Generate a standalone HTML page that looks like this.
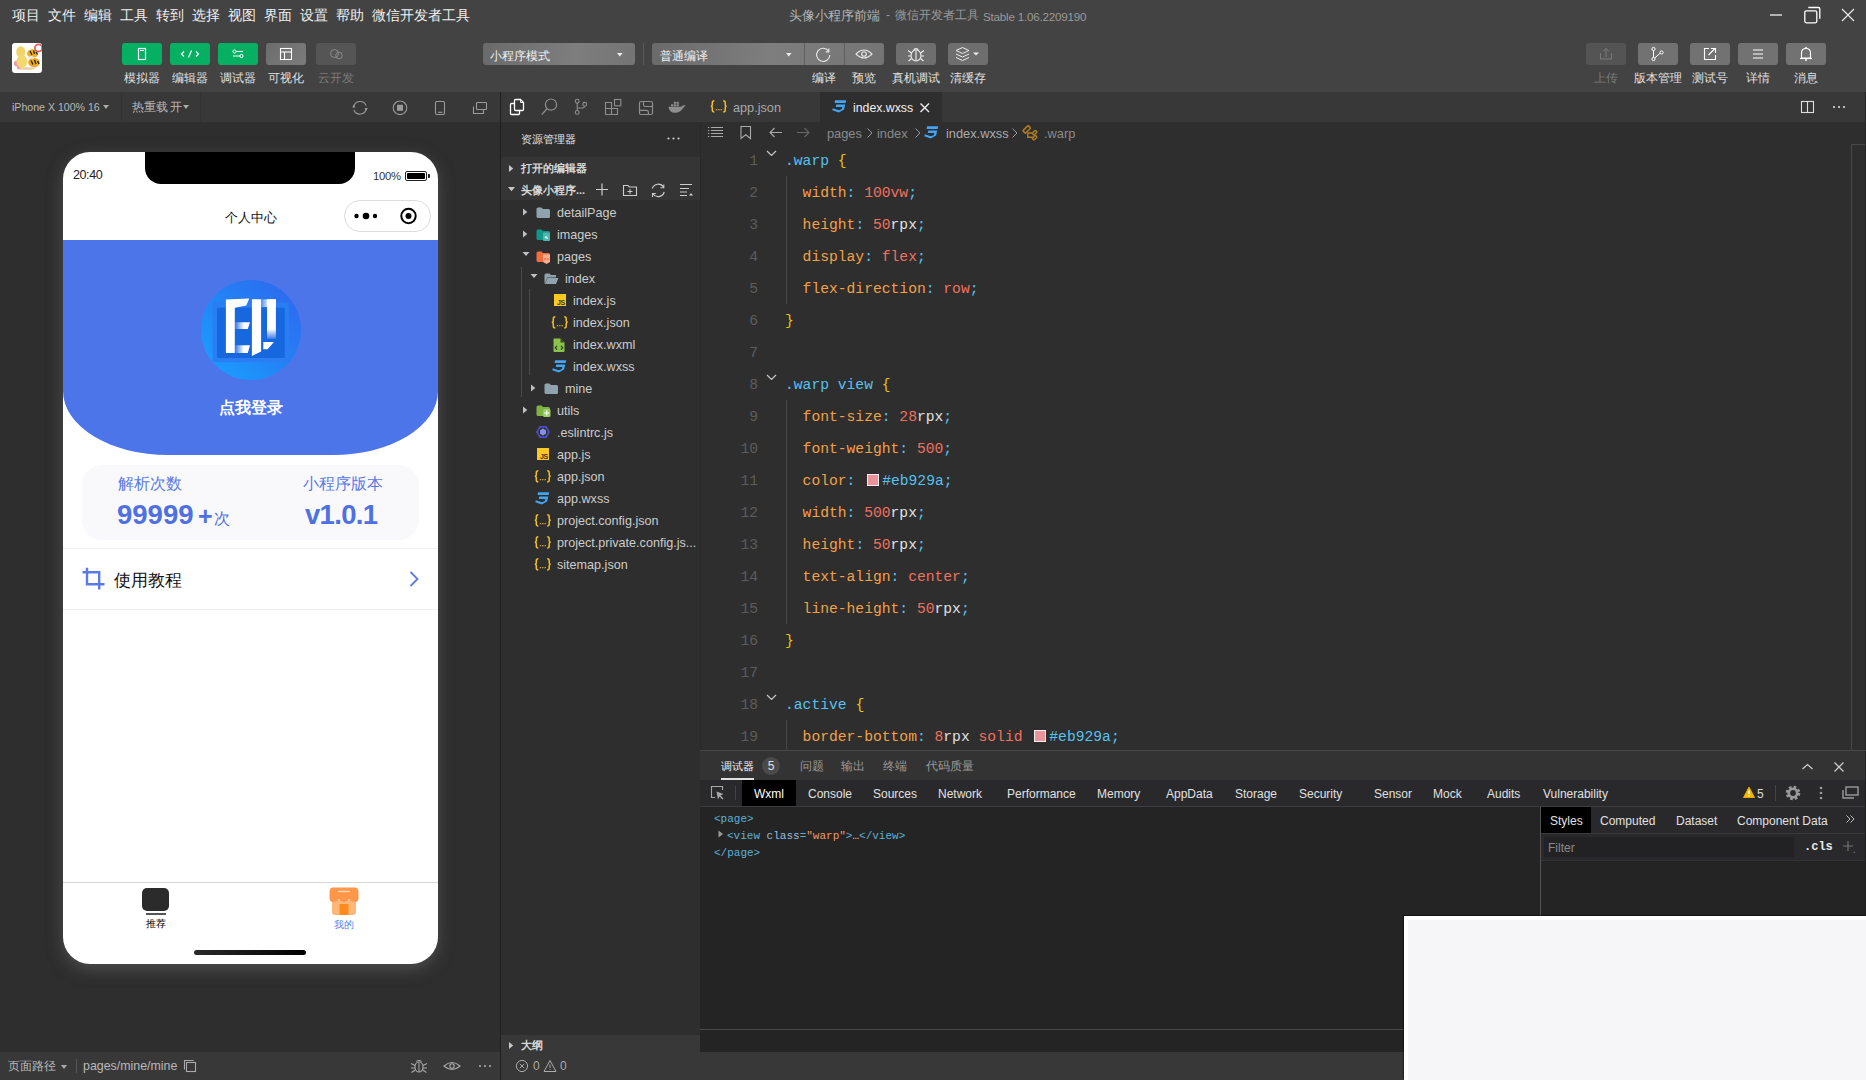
<!DOCTYPE html>
<html><head><meta charset="utf-8">
<style>
*{box-sizing:border-box;margin:0;padding:0}
html,body{width:1866px;height:1080px;overflow:hidden}
body{position:relative;background:#2e2e2e;font-family:"Liberation Sans",sans-serif;color:#ddd}
.a{position:absolute}
.t{position:absolute;white-space:nowrap}
.mono{font-family:"Liberation Mono",monospace}
svg{position:absolute;overflow:visible}
</style></head><body>

<!-- ============ TOP BAR ============ -->
<div class="a" style="left:0;top:0;width:1866px;height:92px;background:#434343"></div>
<div class="t" id="menu" style="left:12px;top:6px;height:18px;font-size:14px;line-height:18px;color:#f0f0f0;display:flex;gap:8px">
<span>项目</span><span>文件</span><span>编辑</span><span>工具</span><span>转到</span><span>选择</span><span>视图</span><span>界面</span><span>设置</span><span>帮助</span><span>微信开发者工具</span>
</div>
<div class="t" style="left:789px;top:7px;font-size:13px;line-height:17px;color:#b4b4b4">头像小程序前端</div><div class="t" style="left:886px;top:7px;font-size:12px;line-height:17px;color:#9a9a9a">-</div><div class="t" style="left:895px;top:7px;font-size:12.1px;line-height:17px;color:#9a9a9a">微信开发者工具</div><div class="t" style="left:983px;top:8px;font-size:11.6px;line-height:17px;color:#9a9a9a;letter-spacing:-0.2px">Stable 1.06.2209190</div>

<div class="a" style="left:12px;top:43px;width:30px;height:30px;border-radius:3px;background:#fff;overflow:hidden"><svg width="30" height="30" style="left:0;top:0"><circle cx="5" cy="20.5" r="3" fill="#ec8a98" opacity="0.85"/><circle cx="7.5" cy="24" r="2.6" fill="#ec8a98" opacity="0.85"/><circle cx="23" cy="23" r="1.8" fill="#ec8a98" opacity="0.7"/><ellipse cx="15" cy="25.5" rx="8" ry="1.3" fill="#e6cfa0"/><ellipse cx="8.8" cy="9" rx="4.6" ry="5.8" fill="#f1d468"/><ellipse cx="10" cy="18.5" rx="5.5" ry="6.5" fill="#f3d870"/><ellipse cx="20.5" cy="10.5" rx="5.6" ry="4.3" fill="#f2b020"/><ellipse cx="22" cy="19.5" rx="5.8" ry="4.5" fill="#eea51f"/><path d="M18 8 L20 12 M21.5 7.5 L22.5 11 M24 9 L25.5 11.5 M19 17.5 L21 21.5 M22.5 17 L24 21 M25.5 18 L27 21" stroke="#222" stroke-width="1.3"/><ellipse cx="19" cy="14.5" rx="3" ry="1.5" fill="#e8e8e8"/><circle cx="26.5" cy="5" r="3.6" fill="none" stroke="#dd5555" stroke-width="1.8" opacity="0.9"/></svg></div>
<div class="a" style="left:122px;top:43px;width:40px;height:22px;border-radius:3px;background:#06b063"><svg width="40" height="22" style="left:0;top:0"><rect x="16.5" y="5.5" width="7" height="11" fill="none" stroke="#fff" stroke-width="1.2"/><line x1="18" y1="7.5" x2="22" y2="7.5" stroke="#fff" stroke-width="1"/></svg></div>
<div class="a" style="left:170px;top:43px;width:40px;height:22px;border-radius:3px;background:#06b063"><svg width="40" height="22" style="left:0;top:0"><path d="M14 8.5 L11.5 11 L14 13.5 M26 8.5 L28.5 11 L26 13.5 M21.5 7.5 L18.5 14.5" fill="none" stroke="#fff" stroke-width="1.2"/></svg></div>
<div class="a" style="left:218px;top:43px;width:40px;height:22px;border-radius:3px;background:#06b063"><svg width="40" height="22" style="left:0;top:0"><line x1="15" y1="8.5" x2="25" y2="8.5" stroke="#fff" stroke-width="1"/><line x1="15" y1="13" x2="25" y2="13" stroke="#fff" stroke-width="1"/><circle cx="16.5" cy="8.5" r="1.6" fill="#06b063" stroke="#fff" stroke-width="1"/><circle cx="23.5" cy="13" r="1.6" fill="#06b063" stroke="#fff" stroke-width="1"/></svg></div>
<div class="a" style="left:266px;top:43px;width:40px;height:22px;border-radius:3px;background:linear-gradient(135deg,#6c6c6c,#7c7c7c)"><svg width="40" height="22" style="left:0;top:0"><rect x="14.5" y="5.5" width="11" height="11" fill="none" stroke="#fff" stroke-width="1.1"/><line x1="14.5" y1="9" x2="25.5" y2="9" stroke="#fff" stroke-width="1.1"/><line x1="18.5" y1="9" x2="18.5" y2="16.5" stroke="#fff" stroke-width="1.1"/></svg></div>
<div class="a" style="left:316px;top:43px;width:40px;height:22px;border-radius:3px;background:#555555"><svg width="40" height="22" style="left:0;top:0"><circle cx="18.5" cy="10.5" r="4" fill="none" stroke="#8a8a8a" stroke-width="1"/><circle cx="23" cy="12.5" r="3.3" fill="none" stroke="#8a8a8a" stroke-width="1"/></svg></div>
<div class="t" style="left:102px;top:70px;width:80px;text-align:center;font-size:12px;line-height:16px;color:#e0e0e0">模拟器</div>
<div class="t" style="left:150px;top:70px;width:80px;text-align:center;font-size:12px;line-height:16px;color:#e0e0e0">编辑器</div>
<div class="t" style="left:198px;top:70px;width:80px;text-align:center;font-size:12px;line-height:16px;color:#e0e0e0">调试器</div>
<div class="t" style="left:246px;top:70px;width:80px;text-align:center;font-size:12px;line-height:16px;color:#e0e0e0">可视化</div>
<div class="t" style="left:296px;top:70px;width:80px;text-align:center;font-size:12px;line-height:16px;color:#7a7a7a">云开发</div>
<div class="a" style="left:483px;top:43px;width:152px;height:22px;border-radius:3px;background:linear-gradient(100deg,#6a6a6a,#7e7e7e 60%,#747474)"></div>
<div class="t" style="left:490px;top:48px;font-size:12.3px;line-height:16px;color:#f0f0f0">小程序模式</div>
<svg width="8" height="5" style="left:617px;top:53px"><path d="M0 0H5.6L2.8 3.4Z" fill="#eee"/></svg>
<div class="a" style="left:643px;top:43px;width:1px;height:22px;background:#5a5a5a"></div>
<div class="a" style="left:652px;top:43px;width:232px;height:22px;border-radius:3px;background:linear-gradient(100deg,#6a6a6a,#7e7e7e 50%,#747474)"></div>
<div class="a" style="left:804px;top:43px;width:1px;height:22px;background:#5f5f5f"></div>
<div class="a" style="left:844px;top:43px;width:1px;height:22px;background:#5f5f5f"></div>
<div class="t" style="left:660px;top:48px;font-size:12.2px;line-height:16px;color:#f0f0f0">普通编译</div>
<svg width="8" height="5" style="left:786px;top:53px"><path d="M0 0H5.6L2.8 3.4Z" fill="#eee"/></svg>
<svg width="18" height="18" style="left:815px;top:45px"><path d="M13.6 6 A6.6 6.6 0 1 0 14.8 10" fill="none" stroke="#e8e8e8" stroke-width="1.1"/><path d="M13.8 3.5 V6.8 H10.8" fill="none" stroke="#e8e8e8" stroke-width="1.2"/></svg>
<svg width="18" height="12" style="left:855px;top:48px"><path d="M1 6 Q9 -2 17 6 Q9 14 1 6Z" fill="none" stroke="#e8e8e8" stroke-width="1.1"/><circle cx="9" cy="6" r="2.3" fill="none" stroke="#e8e8e8" stroke-width="1.1"/></svg>
<div class="a" style="left:896px;top:43px;width:40px;height:22px;border-radius:3px;background:#6e6e6e"></div>
<svg width="18" height="18" style="left:907px;top:46px"><ellipse cx="9" cy="9.5" rx="5" ry="5.5" fill="none" stroke="#eee" stroke-width="1.1"/><line x1="9" y1="5" x2="9" y2="14.5" stroke="#eee" stroke-width="1.1"/><path d="M6.3 4.5 Q9 0.8 11.7 4.5" fill="none" stroke="#eee" stroke-width="1.1"/><path d="M1 4.5 L4.5 7 M17 4.5 L13.5 7 M1 10 H4 M17 10 H14 M1.5 15 L4.5 12.5 M16.5 15 L13.5 12.5" stroke="#eee" stroke-width="1.1"/></svg>
<div class="a" style="left:948px;top:43px;width:40px;height:22px;border-radius:3px;background:#6e6e6e"></div>
<svg width="26" height="16" style="left:955px;top:46px"><path d="M1 4.5 L7.5 1.5 L14 4.5 L7.5 7.5Z" fill="none" stroke="#eee" stroke-width="1"/><path d="M1 8 L7.5 11 L14 8 M1 11.5 L7.5 14.5 L14 11.5" fill="none" stroke="#eee" stroke-width="1"/><path d="M18 6.5 H24 L21 9.5Z" fill="#eee"/></svg>
<div class="t" style="left:784px;top:70px;width:80px;text-align:center;font-size:12px;line-height:16px;color:#e0e0e0">编译</div>
<div class="t" style="left:824px;top:70px;width:80px;text-align:center;font-size:12px;line-height:16px;color:#e0e0e0">预览</div>
<div class="t" style="left:876px;top:70px;width:80px;text-align:center;font-size:12px;line-height:16px;color:#e0e0e0">真机调试</div>
<div class="t" style="left:928px;top:70px;width:80px;text-align:center;font-size:12px;line-height:16px;color:#e0e0e0">清缓存</div>
<div class="a" style="left:1586px;top:43px;width:40px;height:22px;border-radius:3px;background:#545454"><svg width="40" height="22" style="left:0;top:0"><path d="M14.5 10 V16 H25.5 V10" fill="none" stroke="#7a7a7a" stroke-width="1"/><path d="M20 14 V5.5 M17 8.5 L20 5.5 L23 8.5" fill="none" stroke="#7a7a7a" stroke-width="1"/></svg></div>
<div class="a" style="left:1638px;top:43px;width:40px;height:22px;border-radius:3px;background:#727272"><svg width="40" height="22" style="left:0;top:0"><circle cx="15.5" cy="6" r="1.6" fill="none" stroke="#fff" stroke-width="1"/><circle cx="15.5" cy="16" r="1.6" fill="none" stroke="#fff" stroke-width="1"/><circle cx="23.5" cy="9.5" r="1.6" fill="none" stroke="#fff" stroke-width="1"/><path d="M15.5 7.6 V14.4 M22 10.3 L17 14.8" stroke="#fff" stroke-width="1"/></svg></div>
<div class="a" style="left:1690px;top:43px;width:40px;height:22px;border-radius:3px;background:#727272"><svg width="40" height="22" style="left:0;top:0"><path d="M19 5.5 H14.5 V16.5 H25.5 V12" fill="none" stroke="#fff" stroke-width="1.1"/><path d="M18.5 12 L25 5.5 M21 5.5 H25.5 V10" fill="none" stroke="#fff" stroke-width="1.1"/></svg></div>
<div class="a" style="left:1738px;top:43px;width:40px;height:22px;border-radius:3px;background:#727272"><svg width="40" height="22" style="left:0;top:0"><path d="M15 7 H25 M15 11 H25 M15 15 H25" stroke="#fff" stroke-width="1.1"/></svg></div>
<div class="a" style="left:1786px;top:43px;width:40px;height:22px;border-radius:3px;background:#727272"><svg width="40" height="22" style="left:0;top:0"><path d="M15.5 15 V10 Q15.5 5.5 20 5.5 Q24.5 5.5 24.5 10 V15Z" fill="none" stroke="#fff" stroke-width="1.1"/><path d="M14 15.5 H26" stroke="#fff" stroke-width="1.2"/><path d="M19 17 H21" stroke="#fff" stroke-width="1.5"/><circle cx="20" cy="4.5" r="0.8" fill="#fff"/></svg></div>
<div class="t" style="left:1566px;top:70px;width:80px;text-align:center;font-size:12px;line-height:16px;color:#7a7a7a">上传</div>
<div class="t" style="left:1618px;top:70px;width:80px;text-align:center;font-size:12px;line-height:16px;color:#e0e0e0">版本管理</div>
<div class="t" style="left:1670px;top:70px;width:80px;text-align:center;font-size:12px;line-height:16px;color:#e0e0e0">测试号</div>
<div class="t" style="left:1718px;top:70px;width:80px;text-align:center;font-size:12px;line-height:16px;color:#e0e0e0">详情</div>
<div class="t" style="left:1766px;top:70px;width:80px;text-align:center;font-size:12px;line-height:16px;color:#e0e0e0">消息</div>
<svg width="100" height="22" style="left:1766px;top:5px"><path d="M4 10 H16" stroke="#b4b4b4" stroke-width="2"/><rect x="38.8" y="5.8" width="12" height="12" rx="1.5" fill="none" stroke="#fff" stroke-width="1.3"/><path d="M42.3 2.5 H52.5 Q53.8 2.5 53.8 3.8 V13.8" fill="none" stroke="#fff" stroke-width="1.3"/><path d="M76 4 L88 16 M88 4 L76 16" stroke="#eee" stroke-width="1.1"/></svg>
<div class="a" style="left:0;top:92px;width:500px;height:30px;background:#383838"></div>
<div class="a" style="left:121px;top:92px;width:1px;height:30px;background:#333"></div>
<div class="a" style="left:200px;top:92px;width:1px;height:30px;background:#333"></div>
<div class="t" style="left:12px;top:99px;font-size:10.6px;line-height:16px;color:#b8b8b8">iPhone X 100% 16</div>
<svg width="7" height="4" style="left:103px;top:105px"><path d="M0 0H6L3 4Z" fill="#aaa"/></svg>
<div class="t" style="left:132px;top:99px;font-size:12px;line-height:16px;color:#b8b8b8;word-spacing:-1px">热重载 开</div>
<svg width="7" height="4" style="left:183px;top:105px"><path d="M0 0H6L3 4Z" fill="#aaa"/></svg>
<svg width="140" height="22" style="left:350px;top:97px"><path d="M3.8 10 A6.4 6.4 0 0 1 16.1 8.6" fill="none" stroke="#9a9a9a" stroke-width="1.1"/><path d="M16.2 11.6 A6.4 6.4 0 0 1 3.9 13" fill="none" stroke="#9a9a9a" stroke-width="1.1"/><path d="M2.2 10.6 L3.8 7.6 L5.4 10.6Z" fill="#9a9a9a"/><path d="M14.6 11 L16.2 14 L17.8 11Z" fill="#9a9a9a"/><circle cx="50" cy="10.8" r="6.8" fill="none" stroke="#9a9a9a" stroke-width="1.1"/><rect x="47" y="7.8" width="6" height="6" fill="#9a9a9a"/><rect x="85.5" y="4.5" width="9" height="13" rx="1.2" fill="none" stroke="#9a9a9a" stroke-width="1.1"/><path d="M88 15.3 H92.5" stroke="#9a9a9a" stroke-width="1.1"/><rect x="126.5" y="5.5" width="10" height="7" rx="0.8" fill="none" stroke="#9a9a9a" stroke-width="1.1"/><path d="M123.5 9.5 V16.5 H133.5 V13" fill="none" stroke="#9a9a9a" stroke-width="1.1"/></svg>
<div class="a" style="left:0;top:1052px;width:500px;height:28px;background:#383838"></div>
<div class="t" style="left:8px;top:1058px;font-size:12px;line-height:16px;color:#b8b8b8">页面路径</div>
<svg width="7" height="4" style="left:61px;top:1065px"><path d="M0 0H6L3 4Z" fill="#aaa"/></svg>
<div class="a" style="left:76px;top:1059px;width:1px;height:14px;background:#555"></div>
<div class="t" style="left:83px;top:1058px;font-size:12.4px;line-height:16px;color:#b8b8b8">pages/mine/mine</div>
<svg width="14" height="14" style="left:183px;top:1059px"><rect x="3.5" y="3.5" width="9" height="9" fill="none" stroke="#aaa" stroke-width="1.1"/><path d="M1.5 10.5 V1.5 H10.5" fill="none" stroke="#aaa" stroke-width="1.1"/></svg>
<svg width="90" height="16" style="left:409px;top:1058px"><ellipse cx="10" cy="9" rx="4" ry="5" fill="none" stroke="#aaa" stroke-width="1.1"/><line x1="10" y1="5" x2="10" y2="14" stroke="#aaa" stroke-width="1"/><path d="M7.5 3.5 Q10 1.5 12.5 3.5" fill="none" stroke="#aaa" stroke-width="1.1"/><path d="M2 5.5 L6 7.5 M18 5.5 L14 7.5 M2 10 H6 M18 10 H14 M2.5 14.5 L6.3 12 M17.5 14.5 L13.7 12" stroke="#aaa" stroke-width="1.1"/><path d="M35 8 Q43 1 51 8 Q43 15 35 8Z" fill="none" stroke="#aaa" stroke-width="1.1"/><circle cx="43" cy="8" r="2.2" fill="none" stroke="#aaa" stroke-width="1.1"/><circle cx="71" cy="8" r="1.1" fill="#aaa"/><circle cx="76" cy="8" r="1.1" fill="#aaa"/><circle cx="81" cy="8" r="1.1" fill="#aaa"/></svg>
<div class="a" style="left:63px;top:152px;width:375px;height:812px;border-radius:27px;background:#fff;box-shadow:0 5px 16px rgba(110,110,110,0.5);overflow:hidden" id="phone"><div class="a" style="left:82px;top:0;width:210px;height:32px;background:#000;border-radius:0 0 16px 16px"></div><div class="t" style="left:10px;top:16px;font-size:12.5px;line-height:14px;color:#222;letter-spacing:-0.4px">20:40</div><div class="t" style="left:310px;top:18px;font-size:11.3px;line-height:13px;color:#333;letter-spacing:-0.3px">100%</div><div class="a" style="left:342px;top:19px;width:22px;height:10px;border:1.3px solid #222;border-radius:2px;padding:1px"><div style="width:100%;height:100%;background:#000;border-radius:1px"></div></div><div class="a" style="left:364.5px;top:22px;width:2px;height:4px;background:#222;border-radius:0 1px 1px 0"></div><div class="t" style="left:0;top:57px;width:375px;text-align:center;font-size:13.2px;line-height:18px;color:#111">个人中心</div><div class="a" style="left:281px;top:48px;width:87px;height:32px;border:1px solid #dcdcdc;border-radius:16px;background:#fff"></div><svg width="87" height="32" style="left:281px;top:48px"><circle cx="12.5" cy="16" r="2.2" fill="#000"/><circle cx="22" cy="16" r="3.3" fill="#000"/><circle cx="31" cy="16" r="2.2" fill="#000"/><circle cx="64.5" cy="16" r="7.2" fill="none" stroke="#000" stroke-width="2"/><circle cx="64.5" cy="16" r="3" fill="#000"/></svg><div class="a" style="left:0;top:88px;width:375px;height:215px;background:#4d75ea;border-radius:0 0 105px 105px / 0 0 64px 64px"></div><svg width="100" height="100" style="left:138px;top:128px"><defs><linearGradient id="ag" x1="0" y1="1" x2="1" y2="0"><stop offset="0" stop-color="#19a3ff"/><stop offset="0.5" stop-color="#2383f5"/><stop offset="1" stop-color="#2f64ee"/></linearGradient><linearGradient id="fadeL" x1="0" y1="0" x2="1" y2="0"><stop offset="0" stop-color="#fff" stop-opacity="0.1"/><stop offset="0.6" stop-color="#fff"/></linearGradient><linearGradient id="fadeB" x1="0" y1="0" x2="0" y2="1"><stop offset="0.75" stop-color="#fff"/><stop offset="1" stop-color="#fff" stop-opacity="0.15"/></linearGradient><linearGradient id="fadeR" x1="0" y1="0" x2="1" y2="0"><stop offset="0" stop-color="#fff" stop-opacity="0.15"/><stop offset="0.55" stop-color="#fff"/></linearGradient></defs><circle cx="50" cy="50" r="50" fill="url(#ag)"/><g transform="translate(9,10)"><rect x="2.6" y="12.2" width="76.3" height="60" rx="2.5" fill="#2a7df2"/><rect x="7" y="17.8" width="67.8" height="50.3" rx="1.5" fill="#1767df"/><path d="M15.9 9.6 L39.3 8.5 L36.3 15.6 L24.8 17.8 V63 H15.9Z" fill="#fff"/><path d="M24.8 32.2 H40 L37.8 38.9 H24.8Z" fill="url(#fadeL)"/><path d="M24.8 55.2 H40 L37.8 63 H24.8Z" fill="url(#fadeL)"/><path d="M41.9 9.3 H51.1 V61.5 L41.9 65.9Z" fill="#fff"/><path d="M51.1 9.3 H65.9 V17 H51.1Z" fill="url(#fadeR)"/><path d="M57 9.3 H65.9 V48.9 H57Z" fill="url(#fadeB)"/><path d="M53.3 51.9 H64 L57.5 59.3 H53.3Z" fill="#fff"/></g></svg>
<div class="t" style="left:0;top:246px;width:375px;text-align:center;font-size:16px;line-height:20px;color:#fff;font-weight:bold">点我登录</div><div class="a" style="left:19px;top:313px;width:337px;height:75px;border-radius:20px;background:#f9f9fb"></div><div class="t" style="left:55px;top:322px;font-size:16px;line-height:20px;color:#5a7ae8">解析次数</div><div class="t" style="left:54px;top:347px;font-size:27.5px;line-height:32px;color:#4f70e2;font-weight:bold">99999</div><div class="t" style="left:135px;top:348px;font-size:25px;line-height:32px;color:#4f70e2;font-weight:bold">+</div><div class="t" style="left:151px;top:358px;font-size:16px;line-height:18px;color:#4f70e2">次</div><div class="t" style="left:240px;top:322px;font-size:16px;line-height:20px;color:#5a7ae8">小程序版本</div><div class="t" style="left:242px;top:347px;font-size:27.5px;line-height:32px;color:#4f70e2;font-weight:bold;letter-spacing:-0.7px">v1.0.1</div><div class="a" style="left:0;top:396px;width:375px;height:1px;background:#f0f0f0"></div><div class="a" style="left:0;top:457px;width:375px;height:1px;background:#f0f0f0"></div><svg width="24" height="24" style="left:19px;top:415px"><path d="M5 0.8 V17.2 H22.5 M0.5 5.2 H17.2 V22.5" fill="none" stroke="#5a7ae8" stroke-width="2.4"/></svg><div class="t" style="left:51px;top:419px;font-size:17px;line-height:20px;color:#111">使用教程</div><svg width="12" height="18" style="left:346px;top:419px"><path d="M1.5 1 L8.5 8 L1.5 15" fill="none" stroke="#5a7ae8" stroke-width="1.8"/></svg><div class="a" style="left:0;top:730px;width:375px;height:1px;background:#d8d8d8"></div><div class="a" style="left:79px;top:736px;width:27px;height:23px;border-radius:5px;background:#2b2b2b"></div><div class="a" style="left:83px;top:761px;width:20px;height:1.5px;background:#555"></div><div class="t" style="left:43px;top:766px;width:100px;text-align:center;font-size:10px;line-height:12px;color:#000;font-weight:500">推荐</div><svg width="30" height="30" style="left:266px;top:735px"><path d="M3 13 V25 Q3 28 6 28 H24 Q27 28 27 25 V13Z" fill="#fdb77a"/><rect x="10.5" y="17" width="9" height="11" fill="#ff8a1e"/><path d="M4 0.5 H26 Q29.5 0.5 29.5 5 V11 Q29.5 15 26 15 Q22 15 20 12 Q17.5 15 15 15 Q12.5 15 10 12 Q8 15 4 15 Q0.5 15 0.5 11 V5 Q0.5 0.5 4 0.5Z" fill="#ff974a"/><path d="M9 4.5 H21" stroke="#ffd2ad" stroke-width="1.5"/></svg><div class="t" style="left:231px;top:767px;width:100px;text-align:center;font-size:10px;line-height:12px;color:#4a84f5">我的</div><div class="a" style="left:131px;top:797.5px;width:112px;height:5px;border-radius:3px;background:linear-gradient(90deg,#2a2a2a,#000)"></div></div>
<div class="a" style="left:500px;top:92px;width:1px;height:988px;background:#1f1f1f"></div>
<div class="a" style="left:501px;top:92px;width:199px;height:30px;background:#383838"></div>
<svg width="200" height="30" style="left:500px;top:92px"><path d="M14 11.5 H11.5 Q10.5 11.5 10.5 12.5 V21.5 Q10.5 22.5 11.5 22.5 H18.5 Q19.5 22.5 19.5 21.5 V19" fill="none" stroke="#fff" stroke-width="1.3"/><path d="M15.5 7.5 H20.5 L23.5 10.5 V17.5 Q23.5 18.5 22.5 18.5 H15.5 Q14.5 18.5 14.5 17.5 V8.5 Q14.5 7.5 15.5 7.5Z" fill="none" stroke="#fff" stroke-width="1.3"/><path d="M20.5 7.5 V10.5 H23.5" fill="none" stroke="#fff" stroke-width="0.9"/><circle cx="51" cy="12.6" r="5.6" fill="none" stroke="#8e8e8e" stroke-width="1.2"/><path d="M47 16.8 L41.8 22.6" stroke="#8e8e8e" stroke-width="1.3"/><circle cx="77.2" cy="9.2" r="1.9" fill="none" stroke="#8e8e8e" stroke-width="1.1"/><circle cx="77.2" cy="20.4" r="1.9" fill="none" stroke="#8e8e8e" stroke-width="1.1"/><circle cx="84.7" cy="12.3" r="1.9" fill="none" stroke="#8e8e8e" stroke-width="1.1"/><path d="M77.2 11.1 V18.5 M84.7 14.2 Q84.5 16 81.5 16 H77.2" fill="none" stroke="#8e8e8e" stroke-width="1.1"/><path d="M105.5 10.5 H111.5 V16.5 H117.5 V22.5 H105.5Z M105.5 16.5 H111.5 V22.5" fill="none" stroke="#8e8e8e" stroke-width="1.1"/><rect x="114.5" y="7.5" width="6.3" height="6.3" fill="none" stroke="#8e8e8e" stroke-width="1.1"/><rect x="139.5" y="9.5" width="13" height="13" rx="1.5" fill="none" stroke="#8e8e8e" stroke-width="1.2"/><path d="M143.5 9.5 V12.8 Q143.5 14.5 145.2 14.5 H152.5 M139.5 18.3 H146.5 Q148.4 18.3 148.4 20.2 V22.5" fill="none" stroke="#8e8e8e" stroke-width="1.2"/><path d="M168.5 14.8 H181.2 Q183 12.8 185.6 13.6 L183.3 15.8 Q180.5 20.8 175 20.8 Q169 20.8 168.5 14.8Z" fill="#8e8e8e"/><rect x="171" y="12.3" width="2.3" height="2" fill="#8e8e8e"/><rect x="173.8" y="12.3" width="2.3" height="2" fill="#8e8e8e"/><rect x="176.6" y="12.3" width="2.3" height="2" fill="#8e8e8e"/><rect x="173.8" y="9.8" width="2.3" height="2" fill="#8e8e8e"/><rect x="176.6" y="9.8" width="2.3" height="2" fill="#8e8e8e"/></svg>
<div class="a" style="left:501px;top:122px;width:199px;height:913px;background:#2e2e2e"></div><div class="a" style="left:700px;top:122px;width:1px;height:628px;background:#292929;z-index:1"></div>
<div class="t" style="left:521px;top:132px;font-size:11px;line-height:15px;color:#e2e2e2">资源管理器</div>
<svg width="16" height="4" style="left:667px;top:137px"><circle cx="1.5" cy="1.5" r="1.1" fill="#ccc"/><circle cx="6.5" cy="1.5" r="1.1" fill="#ccc"/><circle cx="11.5" cy="1.5" r="1.1" fill="#ccc"/></svg>
<div class="a" style="left:501px;top:157px;width:199px;height:43px;background:#353535"></div>
<svg width="5" height="8" style="left:509px;top:165px"><path d="M0 0 L4.2 3.5 L0 7Z" fill="#c8c8c8"/></svg>
<div class="t" style="left:521px;top:161px;font-size:11px;line-height:15px;color:#d8d8d8;font-weight:bold">打开的编辑器</div>
<svg width="8" height="5" style="left:508px;top:187px"><path d="M0 0 H7 L3.5 4.2Z" fill="#c8c8c8"/></svg>
<div class="t" style="left:521px;top:183px;font-size:11px;line-height:15px;color:#d8d8d8;font-weight:bold">头像小程序...</div>
<svg width="100" height="16" style="left:594px;top:182px"><path d="M8 1.5 V13.5 M2 7.5 H14" stroke="#ccc" stroke-width="1.2"/><path d="M29.5 3.5 H34 L35.5 5 H42.5 V13.5 H29.5Z" fill="none" stroke="#ccc" stroke-width="1.1"/><path d="M36 7 V12 M33.5 9.5 H38.5" stroke="#ccc" stroke-width="1"/><path d="M58.3 6.5 A6.3 6.3 0 0 1 69.5 5" fill="none" stroke="#ccc" stroke-width="1.2"/><path d="M70.2 10 A6.3 6.3 0 0 1 59 12" fill="none" stroke="#ccc" stroke-width="1.2"/><path d="M69.8 2.5 V5.8 H66.5" fill="none" stroke="#ccc" stroke-width="1.1"/><path d="M58.5 15 V11.5 H61.8" fill="none" stroke="#ccc" stroke-width="1.1"/><path d="M86 2.5 H98 M86 6.5 H95 M86 10 H93 M86 13.5 H93" stroke="#ccc" stroke-width="1.1"/><path d="M95 13.5 L97 11 L99 13.5Z" fill="#ccc"/></svg>
<svg width="12" height="14" style="left:522px;top:207px"><path d="M1 1.5 L5.3 5 L1 8.5Z" fill="#c0c0c0"/></svg>
<svg width="16" height="14" style="left:536px;top:207px"><path d="M0.5 2 Q0.5 0.5 2 0.5 H5.5 L7 2 H12.5 Q14 2 14 3.5 V9.5 Q14 11 12.5 11 H2 Q0.5 11 0.5 9.5Z" fill="#8fa3ae"/></svg>
<div class="t" style="left:557px;top:205px;font-size:12.6px;line-height:16px;color:#cccccc">detailPage</div>
<svg width="12" height="14" style="left:522px;top:229px"><path d="M1 1.5 L5.3 5 L1 8.5Z" fill="#c0c0c0"/></svg>
<svg width="16" height="14" style="left:536px;top:229px"><path d="M0.5 2 Q0.5 0.5 2 0.5 H5.5 L7 2 H12.5 Q14 2 14 3.5 V9.5 Q14 11 12.5 11 H2 Q0.5 11 0.5 9.5Z" fill="#12968a"/><rect x="7" y="3.5" width="7" height="8.5" rx="1" fill="#4db6ac"/><path d="M8.5 9 L10 6.5 L12.5 10Z" fill="#e0f2f1"/></svg>
<div class="t" style="left:557px;top:227px;font-size:12.6px;line-height:16px;color:#cccccc">images</div>
<svg width="12" height="14" style="left:522px;top:251px"><path d="M0.5 1 H7.5 L4 5Z" fill="#c0c0c0"/></svg>
<svg width="16" height="14" style="left:536px;top:251px"><path d="M0.5 2 Q0.5 0.5 2 0.5 H5.5 L7 2 H12.5 Q14 2 14 3.5 V9.5 Q14 11 12.5 11 H2 Q0.5 11 0.5 9.5Z" fill="#f06d3f"/><path d="M7 3.5 H14 V11 L10.5 13 L7 11Z" fill="#ffab91"/><path d="M9.5 7 L8.5 8 L9.5 9 M11.5 7 L12.5 8 L11.5 9" stroke="#e64a19" stroke-width="0.9" fill="none"/></svg>
<div class="t" style="left:557px;top:249px;font-size:12.6px;line-height:16px;color:#cccccc">pages</div>
<svg width="12" height="14" style="left:530px;top:273px"><path d="M0.5 1 H7.5 L4 5Z" fill="#c0c0c0"/></svg>
<svg width="16" height="14" style="left:544px;top:273px"><path d="M0.5 2 Q0.5 0.5 2 0.5 H5.5 L7 2 H12 V4.5 H3.5 L0.5 11Z" fill="#8fa3ae"/><path d="M3.5 5 H14.5 L12 11 H0.8Z" fill="#8fa3ae"/></svg>
<div class="t" style="left:565px;top:271px;font-size:12.6px;line-height:16px;color:#cccccc">index</div>
<svg width="14" height="14" style="left:553px;top:294px"><rect x="1" y="0" width="12" height="12" fill="#fbc825"/><text x="12" y="11" font-size="7" font-family="Liberation Sans" font-weight="bold" fill="#3a3320" text-anchor="end" letter-spacing="-0.3">JS</text></svg>
<div class="t" style="left:573px;top:293px;font-size:12.6px;line-height:16px;color:#cccccc">index.js</div>
<svg width="18" height="14" style="left:551px;top:316px"><path d="M4.3 0.8 Q2.3 0.8 2.3 2.8 V4.8 Q2.3 6.3 0.8 6.3 Q2.3 6.3 2.3 7.8 V10 Q2.3 12 4.3 12" fill="none" stroke="#f3bf22" stroke-width="1.5"/><path d="M13.2 0.8 Q15.2 0.8 15.2 2.8 V4.8 Q15.2 6.3 16.7 6.3 Q15.2 6.3 15.2 7.8 V10 Q15.2 12 13.2 12" fill="none" stroke="#f3bf22" stroke-width="1.5"/><rect x="5.8" y="9" width="1.3" height="1.3" fill="#d9a520"/><rect x="8.2" y="9" width="1.3" height="1.3" fill="#d9a520"/><rect x="10.6" y="9" width="1.3" height="1.3" fill="#d9a520"/></svg>
<div class="t" style="left:573px;top:315px;font-size:12.6px;line-height:16px;color:#cccccc">index.json</div>
<svg width="14" height="15" style="left:553px;top:338px"><path d="M1.5 0.5 H7.5 L11.5 4.5 V13 Q11.5 14 10.5 14 H1.5 Q0.5 14 0.5 13 V1.5 Q0.5 0.5 1.5 0.5Z" fill="#8bc34a"/><path d="M7.5 0.5 V4.5 H11.5Z" fill="#2e2e2e" opacity="0.85"/><path d="M4 7.8 L2.3 9.7 L4 11.6 M8 7.8 L9.7 9.7 L8 11.6" stroke="#2b3a1a" stroke-width="1.2" fill="none"/></svg>
<div class="t" style="left:573px;top:337px;font-size:12.6px;line-height:16px;color:#cccccc">index.wxml</div>
<svg width="15" height="14" style="left:552px;top:360px"><path d="M3 0.3 H14.2 L13.6 3 H2.6Z M4.3 4.6 H13.2 L12.1 9.6 L6.8 12.4 L0.3 10.2 L0.8 8.3 L6.8 10.3 L9.9 8.9 L10.3 7 H3.8Z" fill="#42a5f5"/></svg>
<div class="t" style="left:573px;top:359px;font-size:12.6px;line-height:16px;color:#cccccc">index.wxss</div>
<svg width="12" height="14" style="left:530px;top:383px"><path d="M1 1.5 L5.3 5 L1 8.5Z" fill="#c0c0c0"/></svg>
<svg width="16" height="14" style="left:544px;top:383px"><path d="M0.5 2 Q0.5 0.5 2 0.5 H5.5 L7 2 H12.5 Q14 2 14 3.5 V9.5 Q14 11 12.5 11 H2 Q0.5 11 0.5 9.5Z" fill="#8fa3ae"/></svg>
<div class="t" style="left:565px;top:381px;font-size:12.6px;line-height:16px;color:#cccccc">mine</div>
<svg width="12" height="14" style="left:522px;top:405px"><path d="M1 1.5 L5.3 5 L1 8.5Z" fill="#c0c0c0"/></svg>
<svg width="16" height="14" style="left:536px;top:405px"><path d="M0.5 2 Q0.5 0.5 2 0.5 H5.5 L7 2 H12.5 Q14 2 14 3.5 V9.5 Q14 11 12.5 11 H2 Q0.5 11 0.5 9.5Z" fill="#7cb342"/><rect x="7" y="4" width="7.5" height="8" rx="1.5" fill="#9ccc65"/><path d="M10.7 5.5 V10.5 M8.2 8 H13.2" stroke="#fff" stroke-width="1.1"/></svg>
<div class="t" style="left:557px;top:403px;font-size:12.6px;line-height:16px;color:#cccccc">utils</div>
<svg width="15" height="13" style="left:536px;top:426px"><path d="M3.5 0 H10.5 L14 6 L10.5 12 H3.5 L0 6Z" fill="#4b50c8"/><path d="M4.4 1.8 H9.6 L12 6 L9.6 10.2 H4.4 L2 6Z" fill="#2e2e2e"/><path d="M7 2.6 L10 4.3 V7.7 L7 9.4 L4 7.7 V4.3Z" fill="#8a8fe6"/></svg>
<div class="t" style="left:557px;top:425px;font-size:12.6px;line-height:16px;color:#cccccc">.eslintrc.js</div>
<svg width="14" height="14" style="left:536px;top:448px"><rect x="1" y="0" width="12" height="12" fill="#fbc825"/><text x="12" y="11" font-size="7" font-family="Liberation Sans" font-weight="bold" fill="#3a3320" text-anchor="end" letter-spacing="-0.3">JS</text></svg>
<div class="t" style="left:557px;top:447px;font-size:12.6px;line-height:16px;color:#cccccc">app.js</div>
<svg width="18" height="14" style="left:534px;top:470px"><path d="M4.3 0.8 Q2.3 0.8 2.3 2.8 V4.8 Q2.3 6.3 0.8 6.3 Q2.3 6.3 2.3 7.8 V10 Q2.3 12 4.3 12" fill="none" stroke="#f3bf22" stroke-width="1.5"/><path d="M13.2 0.8 Q15.2 0.8 15.2 2.8 V4.8 Q15.2 6.3 16.7 6.3 Q15.2 6.3 15.2 7.8 V10 Q15.2 12 13.2 12" fill="none" stroke="#f3bf22" stroke-width="1.5"/><rect x="5.8" y="9" width="1.3" height="1.3" fill="#d9a520"/><rect x="8.2" y="9" width="1.3" height="1.3" fill="#d9a520"/><rect x="10.6" y="9" width="1.3" height="1.3" fill="#d9a520"/></svg>
<div class="t" style="left:557px;top:469px;font-size:12.6px;line-height:16px;color:#cccccc">app.json</div>
<svg width="15" height="14" style="left:535px;top:492px"><path d="M3 0.3 H14.2 L13.6 3 H2.6Z M4.3 4.6 H13.2 L12.1 9.6 L6.8 12.4 L0.3 10.2 L0.8 8.3 L6.8 10.3 L9.9 8.9 L10.3 7 H3.8Z" fill="#42a5f5"/></svg>
<div class="t" style="left:557px;top:491px;font-size:12.6px;line-height:16px;color:#cccccc">app.wxss</div>
<svg width="18" height="14" style="left:534px;top:514px"><path d="M4.3 0.8 Q2.3 0.8 2.3 2.8 V4.8 Q2.3 6.3 0.8 6.3 Q2.3 6.3 2.3 7.8 V10 Q2.3 12 4.3 12" fill="none" stroke="#f3bf22" stroke-width="1.5"/><path d="M13.2 0.8 Q15.2 0.8 15.2 2.8 V4.8 Q15.2 6.3 16.7 6.3 Q15.2 6.3 15.2 7.8 V10 Q15.2 12 13.2 12" fill="none" stroke="#f3bf22" stroke-width="1.5"/><rect x="5.8" y="9" width="1.3" height="1.3" fill="#d9a520"/><rect x="8.2" y="9" width="1.3" height="1.3" fill="#d9a520"/><rect x="10.6" y="9" width="1.3" height="1.3" fill="#d9a520"/></svg>
<div class="t" style="left:557px;top:513px;font-size:12.6px;line-height:16px;color:#cccccc">project.config.json</div>
<svg width="18" height="14" style="left:534px;top:536px"><path d="M4.3 0.8 Q2.3 0.8 2.3 2.8 V4.8 Q2.3 6.3 0.8 6.3 Q2.3 6.3 2.3 7.8 V10 Q2.3 12 4.3 12" fill="none" stroke="#f3bf22" stroke-width="1.5"/><path d="M13.2 0.8 Q15.2 0.8 15.2 2.8 V4.8 Q15.2 6.3 16.7 6.3 Q15.2 6.3 15.2 7.8 V10 Q15.2 12 13.2 12" fill="none" stroke="#f3bf22" stroke-width="1.5"/><rect x="5.8" y="9" width="1.3" height="1.3" fill="#d9a520"/><rect x="8.2" y="9" width="1.3" height="1.3" fill="#d9a520"/><rect x="10.6" y="9" width="1.3" height="1.3" fill="#d9a520"/></svg>
<div class="t" style="left:557px;top:535px;font-size:12.6px;line-height:16px;color:#cccccc">project.private.config.js...</div>
<svg width="18" height="14" style="left:534px;top:558px"><path d="M4.3 0.8 Q2.3 0.8 2.3 2.8 V4.8 Q2.3 6.3 0.8 6.3 Q2.3 6.3 2.3 7.8 V10 Q2.3 12 4.3 12" fill="none" stroke="#f3bf22" stroke-width="1.5"/><path d="M13.2 0.8 Q15.2 0.8 15.2 2.8 V4.8 Q15.2 6.3 16.7 6.3 Q15.2 6.3 15.2 7.8 V10 Q15.2 12 13.2 12" fill="none" stroke="#f3bf22" stroke-width="1.5"/><rect x="5.8" y="9" width="1.3" height="1.3" fill="#d9a520"/><rect x="8.2" y="9" width="1.3" height="1.3" fill="#d9a520"/><rect x="10.6" y="9" width="1.3" height="1.3" fill="#d9a520"/></svg>
<div class="t" style="left:557px;top:557px;font-size:12.6px;line-height:16px;color:#cccccc">sitemap.json</div>
<div class="a" style="left:521px;top:267px;width:1px;height:130px;background:#4a4a4a"></div>
<div class="a" style="left:529px;top:289px;width:1px;height:86px;background:#4a4a4a"></div>
<div class="a" style="left:501px;top:1035px;width:199px;height:45px;background:#383838"></div>
<svg width="5" height="8" style="left:509px;top:1042px"><path d="M0 0 L4.2 3.5 L0 7Z" fill="#c8c8c8"/></svg>
<div class="t" style="left:521px;top:1038px;font-size:11px;line-height:15px;color:#d8d8d8;font-weight:bold">大纲</div>
<svg width="60" height="14" style="left:515px;top:1059px"><circle cx="7" cy="7" r="5.6" fill="none" stroke="#aaa" stroke-width="1"/><path d="M4.8 4.8 L9.2 9.2 M9.2 4.8 L4.8 9.2" stroke="#aaa" stroke-width="1"/><path d="M35 1.5 L41 12.5 H29Z" fill="none" stroke="#aaa" stroke-width="1"/><path d="M35 5.5 V9 M35 10.3 V11" stroke="#aaa" stroke-width="1"/></svg>
<div class="t" style="left:533px;top:1059px;font-size:12px;line-height:14px;color:#aaa">0</div>
<div class="t" style="left:560px;top:1059px;font-size:12px;line-height:14px;color:#aaa">0</div>
<div class="a" style="left:700px;top:92px;width:1166px;height:658px;background:#2e2e2e"></div>
<div class="a" style="left:700px;top:92px;width:1166px;height:30px;background:#383838"></div>
<div class="a" style="left:820px;top:92px;width:122px;height:30px;background:#2e2e2e"></div>
<svg width="18" height="14" style="left:710px;top:100px"><path d="M4.3 0.8 Q2.3 0.8 2.3 2.8 V4.8 Q2.3 6.3 0.8 6.3 Q2.3 6.3 2.3 7.8 V10 Q2.3 12 4.3 12" fill="none" stroke="#f3bf22" stroke-width="1.5"/><path d="M13.2 0.8 Q15.2 0.8 15.2 2.8 V4.8 Q15.2 6.3 16.7 6.3 Q15.2 6.3 15.2 7.8 V10 Q15.2 12 13.2 12" fill="none" stroke="#f3bf22" stroke-width="1.5"/><rect x="5.8" y="9" width="1.3" height="1.3" fill="#d9a520"/><rect x="8.2" y="9" width="1.3" height="1.3" fill="#d9a520"/><rect x="10.6" y="9" width="1.3" height="1.3" fill="#d9a520"/></svg>
<div class="t" style="left:733px;top:100px;font-size:12.7px;line-height:17px;color:#a8a8a8">app.json</div>
<svg width="15" height="14" style="left:832px;top:100px"><path d="M3 0.3 H14.2 L13.6 3 H2.6Z M4.3 4.6 H13.2 L12.1 9.6 L6.8 12.4 L0.3 10.2 L0.8 8.3 L6.8 10.3 L9.9 8.9 L10.3 7 H3.8Z" fill="#42a5f5"/></svg>
<div class="t" style="left:853px;top:100px;font-size:12.3px;line-height:17px;color:#f0f0f0">index.wxss</div>
<svg width="12" height="12" style="left:919px;top:102px"><path d="M1.5 1.5 L10 10 M10 1.5 L1.5 10" stroke="#eee" stroke-width="1.4"/></svg>
<svg width="60" height="16" style="left:1799px;top:99px"><rect x="2.5" y="2.5" width="12" height="11" fill="none" stroke="#ddd" stroke-width="1.1"/><path d="M8.5 2.5 V13.5" stroke="#ddd" stroke-width="1.1"/><circle cx="35" cy="8" r="1.1" fill="#ddd"/><circle cx="40" cy="8" r="1.1" fill="#ddd"/><circle cx="45" cy="8" r="1.1" fill="#ddd"/></svg>
<div class="a" style="left:1865px;top:92px;width:1px;height:658px;background:#252525"></div>
<svg width="120" height="16" style="left:706px;top:125px"><path d="M5 2.5 H17 M5 5.5 H17 M5 8.5 H17 M5 11.5 H17" stroke="#aaa" stroke-width="1"/><path d="M2 2.5 H3.3 M2 5.5 H3.3 M2 8.5 H3.3 M2 11.5 H3.3" stroke="#aaa" stroke-width="1"/><path d="M35 1.5 H44.5 V13.5 L39.8 9.8 L35 13.5Z" fill="none" stroke="#aaa" stroke-width="1.1"/><path d="M64 7.5 H76 M68.5 3 L64 7.5 L68.5 12" fill="none" stroke="#aaa" stroke-width="1.1"/><path d="M91 7.5 H103 M98.5 3 L103 7.5 L98.5 12" fill="none" stroke="#666" stroke-width="1.1"/></svg>
<div class="t" style="left:827px;top:125px;font-size:12.8px;line-height:17px;color:#8a8a8a">pages</div>
<svg width="8" height="12" style="left:866px;top:127px"><path d="M1.5 1.5 L6 6 L1.5 10.5" fill="none" stroke="#999" stroke-width="1"/></svg>
<div class="t" style="left:877px;top:125px;font-size:12.8px;line-height:17px;color:#8a8a8a">index</div>
<svg width="8" height="12" style="left:914px;top:127px"><path d="M1.5 1.5 L6 6 L1.5 10.5" fill="none" stroke="#999" stroke-width="1"/></svg>
<svg width="15" height="14" style="left:924px;top:126px"><path d="M3 0.3 H14.2 L13.6 3 H2.6Z M4.3 4.6 H13.2 L12.1 9.6 L6.8 12.4 L0.3 10.2 L0.8 8.3 L6.8 10.3 L9.9 8.9 L10.3 7 H3.8Z" fill="#42a5f5"/></svg>
<div class="t" style="left:946px;top:125px;font-size:12.8px;line-height:17px;color:#aaaaaa">index.wxss</div>
<svg width="8" height="12" style="left:1011px;top:127px"><path d="M1.5 1.5 L6 6 L1.5 10.5" fill="none" stroke="#999" stroke-width="1"/></svg>
<svg width="22" height="20" style="left:1020px;top:123px"><rect x="3" y="4.6" width="7.5" height="3.6" rx="0.6" transform="rotate(-45 6.75 6.4)" fill="none" stroke="#b07c24" stroke-width="1.5"/><rect x="12.4" y="8.4" width="4.4" height="2.6" rx="0.5" transform="rotate(-45 14.6 9.7)" fill="none" stroke="#b07c24" stroke-width="1.4"/><rect x="12.4" y="13.4" width="4.4" height="2.6" rx="0.5" transform="rotate(-45 14.6 14.7)" fill="none" stroke="#b07c24" stroke-width="1.4"/><path d="M7.8 9.5 V14.2 H12.6 M8 10 H12.4" fill="none" stroke="#b07c24" stroke-width="1.5"/></svg>
<div class="t" style="left:1044px;top:125px;font-size:12.8px;line-height:17px;color:#8a8a8a">.warp</div>
<div class="a" style="left:1851px;top:144px;width:1px;height:606px;background:#474747"></div><div class="a" style="left:1851px;top:144px;width:14px;height:1px;background:#474747"></div>
<div class="a" style="left:699px;top:145px;width:1151px;height:605px;overflow:hidden"><div class="t mono" style="left:31px;top:0px;width:28px;text-align:right;font-size:14.67px;line-height:32px;color:#5c5c5c">1</div>
<div class="t mono" style="left:86px;top:0px;font-size:14.67px;line-height:32px;white-space:pre"><span style="color:#55c2f0">.warp</span> <span style="color:#e8c600">{</span></div>
<div class="t mono" style="left:31px;top:32px;width:28px;text-align:right;font-size:14.67px;line-height:32px;color:#5c5c5c">2</div>
<div class="t mono" style="left:86px;top:32px;font-size:14.67px;line-height:32px;white-space:pre">  <span style="color:#f5a142">width</span><span style="color:#55c2f0">:</span> <span style="color:#f2705f">100vw</span><span style="color:#55c2f0">;</span></div>
<div class="t mono" style="left:31px;top:64px;width:28px;text-align:right;font-size:14.67px;line-height:32px;color:#5c5c5c">3</div>
<div class="t mono" style="left:86px;top:64px;font-size:14.67px;line-height:32px;white-space:pre">  <span style="color:#f5a142">height</span><span style="color:#55c2f0">:</span> <span style="color:#f2705f">50</span><span style="color:#e0e0e0">rpx</span><span style="color:#55c2f0">;</span></div>
<div class="t mono" style="left:31px;top:96px;width:28px;text-align:right;font-size:14.67px;line-height:32px;color:#5c5c5c">4</div>
<div class="t mono" style="left:86px;top:96px;font-size:14.67px;line-height:32px;white-space:pre">  <span style="color:#f5a142">display</span><span style="color:#55c2f0">:</span> <span style="color:#f2705f">flex</span><span style="color:#55c2f0">;</span></div>
<div class="t mono" style="left:31px;top:128px;width:28px;text-align:right;font-size:14.67px;line-height:32px;color:#5c5c5c">5</div>
<div class="t mono" style="left:86px;top:128px;font-size:14.67px;line-height:32px;white-space:pre">  <span style="color:#f5a142">flex-direction</span><span style="color:#55c2f0">:</span> <span style="color:#f2705f">row</span><span style="color:#55c2f0">;</span></div>
<div class="t mono" style="left:31px;top:160px;width:28px;text-align:right;font-size:14.67px;line-height:32px;color:#5c5c5c">6</div>
<div class="t mono" style="left:86px;top:160px;font-size:14.67px;line-height:32px;white-space:pre"><span style="color:#e8c600">}</span></div>
<div class="t mono" style="left:31px;top:192px;width:28px;text-align:right;font-size:14.67px;line-height:32px;color:#5c5c5c">7</div>
<div class="t mono" style="left:86px;top:192px;font-size:14.67px;line-height:32px;white-space:pre"></div>
<div class="t mono" style="left:31px;top:224px;width:28px;text-align:right;font-size:14.67px;line-height:32px;color:#5c5c5c">8</div>
<div class="t mono" style="left:86px;top:224px;font-size:14.67px;line-height:32px;white-space:pre"><span style="color:#55c2f0">.warp view</span> <span style="color:#e8c600">{</span></div>
<div class="t mono" style="left:31px;top:256px;width:28px;text-align:right;font-size:14.67px;line-height:32px;color:#5c5c5c">9</div>
<div class="t mono" style="left:86px;top:256px;font-size:14.67px;line-height:32px;white-space:pre">  <span style="color:#f5a142">font-size</span><span style="color:#55c2f0">:</span> <span style="color:#f2705f">28</span><span style="color:#e0e0e0">rpx</span><span style="color:#55c2f0">;</span></div>
<div class="t mono" style="left:31px;top:288px;width:28px;text-align:right;font-size:14.67px;line-height:32px;color:#5c5c5c">10</div>
<div class="t mono" style="left:86px;top:288px;font-size:14.67px;line-height:32px;white-space:pre">  <span style="color:#f5a142">font-weight</span><span style="color:#55c2f0">:</span> <span style="color:#f2705f">500</span><span style="color:#55c2f0">;</span></div>
<div class="t mono" style="left:31px;top:320px;width:28px;text-align:right;font-size:14.67px;line-height:32px;color:#5c5c5c">11</div>
<div class="t mono" style="left:86px;top:320px;font-size:14.67px;line-height:32px;white-space:pre">  <span style="color:#f5a142">color</span><span style="color:#55c2f0">:</span> <span style="display:inline-block;width:12px;height:12px;background:#eb929a;border:1px solid #f0f0f0;margin:0 3px 0 3px;vertical-align:-1px"></span><span style="color:#55c2f0">#eb929a</span><span style="color:#55c2f0">;</span></div>
<div class="t mono" style="left:31px;top:352px;width:28px;text-align:right;font-size:14.67px;line-height:32px;color:#5c5c5c">12</div>
<div class="t mono" style="left:86px;top:352px;font-size:14.67px;line-height:32px;white-space:pre">  <span style="color:#f5a142">width</span><span style="color:#55c2f0">:</span> <span style="color:#f2705f">500</span><span style="color:#e0e0e0">rpx</span><span style="color:#55c2f0">;</span></div>
<div class="t mono" style="left:31px;top:384px;width:28px;text-align:right;font-size:14.67px;line-height:32px;color:#5c5c5c">13</div>
<div class="t mono" style="left:86px;top:384px;font-size:14.67px;line-height:32px;white-space:pre">  <span style="color:#f5a142">height</span><span style="color:#55c2f0">:</span> <span style="color:#f2705f">50</span><span style="color:#e0e0e0">rpx</span><span style="color:#55c2f0">;</span></div>
<div class="t mono" style="left:31px;top:416px;width:28px;text-align:right;font-size:14.67px;line-height:32px;color:#5c5c5c">14</div>
<div class="t mono" style="left:86px;top:416px;font-size:14.67px;line-height:32px;white-space:pre">  <span style="color:#f5a142">text-align</span><span style="color:#55c2f0">:</span> <span style="color:#f2705f">center</span><span style="color:#55c2f0">;</span></div>
<div class="t mono" style="left:31px;top:448px;width:28px;text-align:right;font-size:14.67px;line-height:32px;color:#5c5c5c">15</div>
<div class="t mono" style="left:86px;top:448px;font-size:14.67px;line-height:32px;white-space:pre">  <span style="color:#f5a142">line-height</span><span style="color:#55c2f0">:</span> <span style="color:#f2705f">50</span><span style="color:#e0e0e0">rpx</span><span style="color:#55c2f0">;</span></div>
<div class="t mono" style="left:31px;top:480px;width:28px;text-align:right;font-size:14.67px;line-height:32px;color:#5c5c5c">16</div>
<div class="t mono" style="left:86px;top:480px;font-size:14.67px;line-height:32px;white-space:pre"><span style="color:#e8c600">}</span></div>
<div class="t mono" style="left:31px;top:512px;width:28px;text-align:right;font-size:14.67px;line-height:32px;color:#5c5c5c">17</div>
<div class="t mono" style="left:86px;top:512px;font-size:14.67px;line-height:32px;white-space:pre"></div>
<div class="t mono" style="left:31px;top:544px;width:28px;text-align:right;font-size:14.67px;line-height:32px;color:#5c5c5c">18</div>
<div class="t mono" style="left:86px;top:544px;font-size:14.67px;line-height:32px;white-space:pre"><span style="color:#55c2f0">.active</span> <span style="color:#e8c600">{</span></div>
<div class="t mono" style="left:31px;top:576px;width:28px;text-align:right;font-size:14.67px;line-height:32px;color:#5c5c5c">19</div>
<div class="t mono" style="left:86px;top:576px;font-size:14.67px;line-height:32px;white-space:pre">  <span style="color:#f5a142">border-bottom</span><span style="color:#55c2f0">:</span> <span style="color:#f2705f">8</span><span style="color:#e0e0e0">rpx</span> <span style="color:#f2705f">solid</span> <span style="display:inline-block;width:12px;height:12px;background:#eb929a;border:1px solid #f0f0f0;margin:0 3px 0 3px;vertical-align:-1px"></span><span style="color:#55c2f0">#eb929a</span><span style="color:#55c2f0">;</span></div></div>
<svg width="12" height="8" style="left:766px;top:150px"><path d="M1 1 L5.5 5.5 L10 1" fill="none" stroke="#c8c8c8" stroke-width="1.2"/></svg>
<svg width="12" height="8" style="left:766px;top:374px"><path d="M1 1 L5.5 5.5 L10 1" fill="none" stroke="#c8c8c8" stroke-width="1.2"/></svg>
<svg width="12" height="8" style="left:766px;top:694px"><path d="M1 1 L5.5 5.5 L10 1" fill="none" stroke="#c8c8c8" stroke-width="1.2"/></svg>
<div class="a" style="left:786px;top:176px;width:1px;height:128px;background:#484848"></div>
<div class="a" style="left:786px;top:400px;width:1px;height:224px;background:#484848"></div>
<div class="a" style="left:786px;top:720px;width:1px;height:30px;background:#484848"></div>
<div class="a" style="left:700px;top:750px;width:1166px;height:1px;background:#474747"></div>
<div class="a" style="left:700px;top:751px;width:1166px;height:29px;background:#333333"></div>
<div class="t" style="left:721px;top:759px;font-size:11.2px;line-height:15px;color:#f0f0f0;font-weight:500">调试器</div>
<div class="a" style="left:762px;top:757px;width:18px;height:18px;border-radius:50%;background:#4a4a4a;color:#e0e0e0;font-size:12px;line-height:18px;text-align:center">5</div>
<div class="a" style="left:721px;top:778px;width:33px;height:2px;background:#e0e0e0"></div>
<div class="t" style="left:800px;top:759px;font-size:11.5px;line-height:15px;color:#9a9a9a">问题</div>
<div class="t" style="left:841px;top:759px;font-size:11.5px;line-height:15px;color:#9a9a9a">输出</div>
<div class="t" style="left:883px;top:759px;font-size:11.5px;line-height:15px;color:#9a9a9a">终端</div>
<div class="t" style="left:926px;top:759px;font-size:11.5px;line-height:15px;color:#9a9a9a">代码质量</div>
<svg width="60" height="14" style="left:1798px;top:760px"><path d="M4.5 9 L9.5 4.5 L14.5 9" fill="none" stroke="#ccc" stroke-width="1.3"/><path d="M36.5 2.5 L45.5 11.5 M45.5 2.5 L36.5 11.5" stroke="#ccc" stroke-width="1.3"/></svg>
<div class="a" style="left:700px;top:780px;width:1166px;height:26px;background:#29292b"></div>
<div class="a" style="left:700px;top:806px;width:1166px;height:1px;background:#3c3c3e"></div>
<svg width="16" height="16" style="left:710px;top:785px"><path d="M5 12.5 H1.5 V1.5 H12.5 V5" fill="none" stroke="#a8a8a8" stroke-width="1.1"/><path d="M6.5 6.5 L13.5 9 L10.5 10.5 L13.5 13.5 L12.5 14.5 L9.5 11.5 L8 14.5Z" fill="#a8a8a8"/></svg>
<div class="a" style="left:735px;top:786px;width:1px;height:14px;background:#444"></div>
<div class="a" style="left:742px;top:780px;width:54px;height:26px;background:#000"></div>
<div class="t" style="left:754px;top:786px;font-size:12px;line-height:16px;color:#ffffff">Wxml</div>
<div class="t" style="left:808px;top:786px;font-size:12px;line-height:16px;color:#e0e0e0">Console</div>
<div class="t" style="left:873px;top:786px;font-size:12px;line-height:16px;color:#e0e0e0">Sources</div>
<div class="t" style="left:938px;top:786px;font-size:12px;line-height:16px;color:#e0e0e0">Network</div>
<div class="t" style="left:1007px;top:786px;font-size:12px;line-height:16px;color:#e0e0e0">Performance</div>
<div class="t" style="left:1097px;top:786px;font-size:12px;line-height:16px;color:#e0e0e0">Memory</div>
<div class="t" style="left:1166px;top:786px;font-size:12px;line-height:16px;color:#e0e0e0">AppData</div>
<div class="t" style="left:1235px;top:786px;font-size:12px;line-height:16px;color:#e0e0e0">Storage</div>
<div class="t" style="left:1299px;top:786px;font-size:12px;line-height:16px;color:#e0e0e0">Security</div>
<div class="t" style="left:1374px;top:786px;font-size:12px;line-height:16px;color:#e0e0e0">Sensor</div>
<div class="t" style="left:1433px;top:786px;font-size:12px;line-height:16px;color:#e0e0e0">Mock</div>
<div class="t" style="left:1487px;top:786px;font-size:12px;line-height:16px;color:#e0e0e0">Audits</div>
<div class="t" style="left:1543px;top:786px;font-size:12px;line-height:16px;color:#e0e0e0">Vulnerability</div>
<svg width="14" height="14" style="left:1743px;top:786px"><path d="M6 1 L11.5 11.5 H0.5Z" fill="#f5b800" stroke="#f5b800" stroke-width="0.8" stroke-linejoin="round"/><path d="M6 4.5 V8 M6 9.3 V10.5" stroke="#fff" stroke-width="1.4"/></svg>
<div class="t" style="left:1757px;top:786px;font-size:12px;line-height:16px;color:#ddd">5</div>
<div class="a" style="left:1775px;top:785px;width:1px;height:16px;background:#444"></div>
<svg width="80" height="20" style="left:1783px;top:783px"><circle cx="10" cy="10" r="6" fill="none" stroke="#9a9a9a" stroke-width="2.6" stroke-dasharray="2.6 2.1"/><circle cx="10" cy="10" r="4.2" fill="none" stroke="#9a9a9a" stroke-width="2.6"/><circle cx="38" cy="5" r="1.3" fill="#9a9a9a"/><circle cx="38" cy="10" r="1.3" fill="#9a9a9a"/><circle cx="38" cy="15" r="1.3" fill="#9a9a9a"/><rect x="63" y="4" width="12" height="8" fill="none" stroke="#9a9a9a" stroke-width="1.4"/><path d="M60 7 V15 H71" fill="none" stroke="#9a9a9a" stroke-width="1.4"/></svg>
<div class="a" style="left:700px;top:807px;width:1166px;height:245px;background:#242424"></div>
<div class="t mono" style="left:714px;top:811px;font-size:11px;line-height:17px;color:#5db0d7;white-space:pre">&lt;page&gt;</div>
<svg width="6" height="8" style="left:718px;top:830px"><path d="M0.5 0.5 L5 4 L0.5 7.5Z" fill="#9a9a9a"/></svg>
<div class="t mono" style="left:727px;top:828px;font-size:11px;line-height:17px;color:#5db0d7;white-space:pre">&lt;view <span style="color:#9bbbdc">class</span>=<span style="color:#f29766">"warp"</span>&gt;<span style="color:#ccc">…</span>&lt;/view&gt;</div>
<div class="t mono" style="left:714px;top:845px;font-size:11px;line-height:17px;color:#5db0d7;white-space:pre">&lt;/page&gt;</div>
<div class="a" style="left:1540px;top:807px;width:1px;height:245px;background:#525252"></div>
<div class="a" style="left:1541px;top:807px;width:325px;height:53px;background:#29292b"></div>
<div class="a" style="left:1541px;top:807px;width:50px;height:26px;background:#000"></div>
<div class="t" style="left:1550px;top:813px;font-size:12px;line-height:16px;color:#e0e0e0">Styles</div>
<div class="t" style="left:1600px;top:813px;font-size:12px;line-height:16px;color:#e0e0e0">Computed</div>
<div class="t" style="left:1676px;top:813px;font-size:12px;line-height:16px;color:#e0e0e0">Dataset</div>
<div class="t" style="left:1737px;top:813px;font-size:12px;line-height:16px;color:#e0e0e0">Component Data</div>
<svg width="12" height="12" style="left:1845px;top:814px"><path d="M1.5 1.5 L5 5 L1.5 8.5 M5.5 1.5 L9 5 L5.5 8.5" fill="none" stroke="#bbb" stroke-width="1"/></svg>
<div class="a" style="left:1541px;top:833px;width:325px;height:1px;background:#3a3a3a"></div>
<div class="a" style="left:1544px;top:837px;width:250px;height:20px;background:#222224"></div>
<div class="t" style="left:1548px;top:840px;font-size:12px;line-height:16px;color:#8a8a8a">Filter</div>
<div class="t mono" style="left:1804px;top:839px;font-size:12px;line-height:16px;color:#e8e8e8;font-weight:bold">.cls</div>
<svg width="14" height="14" style="left:1841px;top:840px"><path d="M7 1 V11 M2 6 H12" stroke="#777" stroke-width="1.1"/><path d="M12 13 L14 11 V13Z" fill="#666"/></svg>
<div class="a" style="left:1541px;top:860px;width:325px;height:1px;background:#333"></div>
<div class="a" style="left:700px;top:1029px;width:1166px;height:1px;background:#4a4a4a"></div>
<div class="a" style="left:700px;top:1052px;width:1166px;height:28px;background:#383838"></div>
<div class="a" style="left:1865px;top:751px;width:1px;height:165px;background:#1f1f1f"></div>
<div class="a" style="left:1404px;top:916px;width:462px;height:164px;background:#f6f6f8;border-left:4px solid #fff;border-top:4px solid #fff;box-shadow:-1px -1px 1px rgba(0,0,0,0.4)"></div>
</body></html>
